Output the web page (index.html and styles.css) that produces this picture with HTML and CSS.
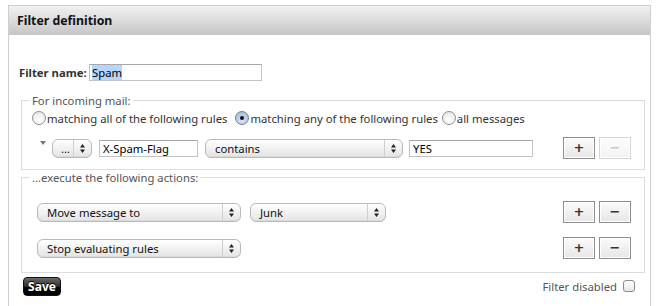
FILE: index.html
```html
<!DOCTYPE html>
<html>
<head>
<meta charset="utf-8">
<link rel="stylesheet" href="styles.css">
</head>
<body>
<div class="panel">
  <div class="header">Filter definition</div>
  <div class="content">
    <div class="name-row">
      <label class="name-label">Filter name:</label>
      <div class="textbox name-box"><span class="sel">Spam</span></div>
    </div>

    <fieldset class="group rules">
      <legend>For incoming mail:</legend>
      <div class="radio-row">
        <span class="radio"></span><span class="radio-label">matching all of the following rules</span>
        <span class="radio on"></span><span class="radio-label">matching any of the following rules</span>
        <span class="radio"></span><span class="radio-label">all messages</span>
      </div>
      <div class="row rule-row">
        <span class="disclosure"></span>
        <div class="select w-dots"><span class="sel-text">...</span><span class="arrows"><svg width="5" height="9" viewBox="0 0 5 9"><path d="M0 3.5L2.5 0L5 3.5Z M0 5.5L2.5 9L5 5.5Z" fill="#222"/></svg></span></div>
        <input class="textbox w-header" type="text" value="X-Spam-Flag">
        <div class="select w-op"><span class="sel-text">contains</span><span class="arrows"><svg width="5" height="9" viewBox="0 0 5 9"><path d="M0 3.5L2.5 0L5 3.5Z M0 5.5L2.5 9L5 5.5Z" fill="#222"/></svg></span></div>
        <input class="textbox w-value" type="text" value="YES">
        <span class="spacer"></span>
        <button class="pm">+</button>
        <button class="pm disabled">&minus;</button>
      </div>
    </fieldset>

    <fieldset class="group actions">
      <legend>...execute the following actions:</legend>
      <div class="row action-row first">
        <div class="select w-action"><span class="sel-text">Move message to</span><span class="arrows"><svg width="5" height="9" viewBox="0 0 5 9"><path d="M0 3.5L2.5 0L5 3.5Z M0 5.5L2.5 9L5 5.5Z" fill="#222"/></svg></span></div>
        <div class="select w-folder"><span class="sel-text">Junk</span><span class="arrows"><svg width="5" height="9" viewBox="0 0 5 9"><path d="M0 3.5L2.5 0L5 3.5Z M0 5.5L2.5 9L5 5.5Z" fill="#222"/></svg></span></div>
        <span class="spacer"></span>
        <button class="pm">+</button>
        <button class="pm">&minus;</button>
      </div>
      <div class="row action-row">
        <div class="select w-action"><span class="sel-text">Stop evaluating rules</span><span class="arrows"><svg width="5" height="9" viewBox="0 0 5 9"><path d="M0 3.5L2.5 0L5 3.5Z M0 5.5L2.5 9L5 5.5Z" fill="#222"/></svg></span></div>
        <span class="spacer"></span>
        <button class="pm">+</button>
        <button class="pm">&minus;</button>
      </div>
    </fieldset>

    <div class="footer">
      <button class="save">Save</button>
      <span class="spacer"></span>
      <label class="disabled-label">Filter disabled</label>
      <span class="checkbox"></span>
    </div>
  </div>
</div>
</body>
</html>
```
FILE: styles.css
```css
html, body {
  margin: 0;
  padding: 0;
  background: #fff;
}
body {
  font-family: "Noto Sans", "DejaVu Sans", sans-serif;
  font-size: 11.3px;
  color: #333;
}
.panel {
  margin: 5px 0 0 8px;
  width: 641px;
  height: 300px;
  border: 1px solid #cfcfcf;
  border-bottom: none;
  overflow: hidden;
}
.header {
  height: 29px;
  line-height: 29px;
  padding-left: 8px;
  font-weight: bold;
  font-size: 12.3px;
  color: #111;
  background: linear-gradient(#f1f1f1, #c6c6c6);
}
.content {
  padding: 29px 5px 0 10px;
}
.name-row {
  display: flex;
  align-items: center;
  height: 17px;
}
.name-label {
  font-weight: bold;
  color: #333;
  width: 70px;
}
.textbox {
  box-sizing: border-box;
  height: 17px;
  border: 1px solid #c3c3c3;
  border-top-color: #a8a8a8;
  background: #fff;
  font-family: "Noto Sans", "DejaVu Sans", sans-serif;
  font-size: 11.3px;
  color: #000;
  padding: 0 3px;
  margin: 0;
  line-height: 15px;
  outline: none;
}
.name-box {
  width: 173px;
  padding: 0 2px;
}
.sel {
  background: #b4d5fe;
  display: inline-block;
  line-height: 15px;
}
.group {
  margin: 12px 0 0 2px;
  padding: 0;
  border: 1px solid #dcdcdc;
  min-width: 0;
}
.group legend {
  margin-left: 8px;
  padding: 0 2px;
  line-height: 15px;
  color: #555;
}
.rules {
  padding: 2px 13px 10px 0;
}
.radio-row {
  display: flex;
  align-items: center;
  height: 16px;
  padding-left: 10px;
  color: #333;
}
.radio {
  box-sizing: border-box;
  width: 14px;
  height: 14px;
  border-radius: 50%;
  border: 1px solid #8f8f8f;
  background: radial-gradient(circle at 50% 70%, #ffffff, #e2e2e2);
  position: relative;
  flex: none;
}
.radio.on {
  border-color: #6f7f96;
  background: radial-gradient(circle at 50% 70%, #d8e6f7, #9ab4d6);
  margin-left: 8px;
}
.radio.on::after {
  content: "";
  position: absolute;
  left: 4px;
  top: 4px;
  width: 4px;
  height: 4px;
  border-radius: 50%;
  background: #111;
}
.radio + .radio-label {
  margin-left: 1px;
}
.radio-label + .radio:not(.on) {
  margin-left: 4px;
}
.row {
  display: flex;
  align-items: center;
}
.rule-row {
  margin-top: 11px;
  height: 22px;
  padding-left: 10px;
}
.spacer {
  flex: 1;
}
.disclosure {
  width: 0;
  height: 0;
  border-left: 3px solid transparent;
  border-right: 3px solid transparent;
  border-top: 4px solid #777;
  margin: 0 6px 5px 8px;
  align-self: center;
  transform: translateY(-3px);
}
.select {
  box-sizing: border-box;
  height: 19px;
  display: flex;
  align-items: center;
  border: 1px solid #b9b9b9;
  border-radius: 6px;
  background: linear-gradient(#ffffff, #f3f3f3 45%, #e3e3e3);
  color: #111;
  flex: none;
  box-shadow: inset 0 -1px 0 rgba(0,0,0,0.04);
}
.sel-text {
  flex: 1;
  padding-left: 9px;
  white-space: nowrap;
  overflow: hidden;
}
.arrows {
  width: 17px;
  height: 100%;
  border-left: 1px solid #cfcfcf;
  display: flex;
  align-items: center;
  justify-content: center;
}
.arrows svg {
  display: block;
}
.w-dots {
  width: 40px;
}
.w-dots .sel-text {
  padding-left: 8px;
}
.w-header {
  width: 99px;
  margin-left: 7px;
}
.w-op {
  width: 198px;
  margin-left: 7px;
}
.w-value {
  width: 124px;
  margin-left: 6px;
}
.pm {
  box-sizing: border-box;
  width: 32px;
  height: 22px;
  margin: 0 0 0 4px;
  padding: 0;
  border: 1px solid #8e8e8e;
  background: linear-gradient(#fbfbfb, #e6e6e6);
  font-family: "DejaVu Sans", sans-serif;
  font-size: 13px;
  font-weight: bold;
  line-height: 18px;
  color: #333;
  box-shadow: inset 0 0 0 1px #fff;
}
.pm.disabled {
  border-color: #d5d5d5;
  color: #c8c8c8;
  background: linear-gradient(#fdfdfd, #f2f2f2);
}
.actions {
  margin-top: 0;
  padding: 4px 13px 13px 0;
}
.action-row {
  height: 22px;
  padding-left: 15px;
}
.action-row.first {
  margin-top: 12px;
}
.action-row + .action-row {
  margin-top: 14px;
}
.w-action {
  width: 204px;
}
.w-folder {
  width: 136px;
  margin-left: 9px;
}
.footer {
  display: flex;
  align-items: center;
  margin: 3px 10px 0 4px;
  height: 20px;
}
.save {
  box-sizing: border-box;
  width: 38px;
  height: 19px;
  margin: 0;
  padding: 0 0 1px;
  border: 1px solid #111;
  border-radius: 4px;
  background: linear-gradient(#6a6a6a, #2e2e2e 50%, #050505 52%, #000);
  color: #fff;
  font-family: "Noto Sans", "DejaVu Sans", sans-serif;
  font-weight: bold;
  font-size: 12px;
  text-shadow: 0 -1px 0 #000;
}
.disabled-label {
  color: #555;
  margin-right: 6px;
}
.checkbox {
  box-sizing: border-box;
  width: 12px;
  height: 12px;
  border: 1px solid #8a8a8a;
  border-radius: 3px;
  background: linear-gradient(#ffffff, #e6e6e6);
}
```
